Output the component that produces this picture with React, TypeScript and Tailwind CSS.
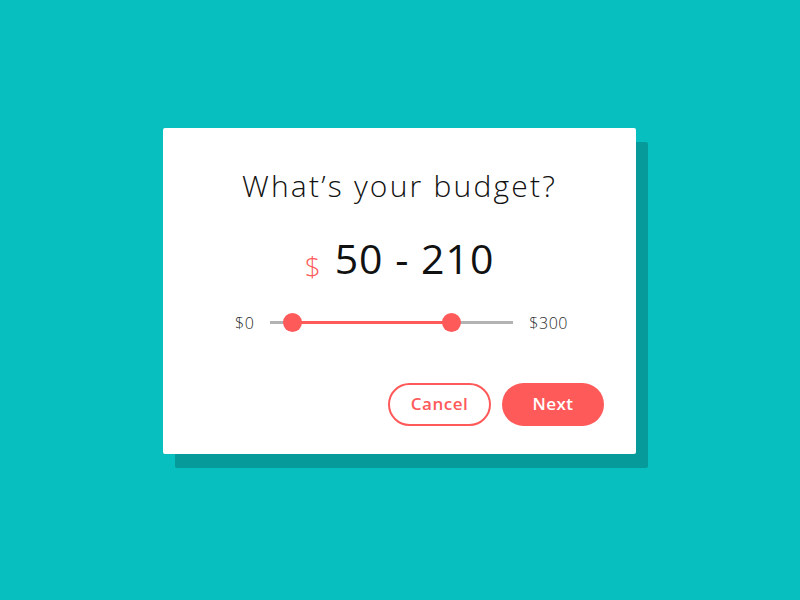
import { useState } from "react";

const MIN = 0;
const MAX = 300;
const TRACK_W = 243;

const thumbX = (v: number) => 22 + ((v - 50) / 160) * 159;

const BudgetSlider = ({ low, high }: { low: number; high: number }) => {
  const a = thumbX(low);
  const b = thumbX(high);

  return (
    <div className="flex items-center gap-4 text-[16px] font-light tracking-[0.5px] text-[#2a2a2a]">
      <span>${MIN}</span>
      <div className="relative w-[243px] h-[19px] flex items-center">
        <div className="h-[3px] w-full bg-[#b3b3b3]" />
        <div className="absolute h-[3px] bg-[#fe5a5a]" style={{ left: a, width: b - a }} />
        <div
          className="absolute w-[19px] h-[19px] -ml-[9.5px] rounded-full bg-[#fe5a5a]"
          style={{ left: a }}
        />
        <div
          className="absolute w-[19px] h-[19px] -ml-[9.5px] rounded-full bg-[#fe5a5a]"
          style={{ left: Math.min(b, TRACK_W) }}
        />
      </div>
      <span>${MAX}</span>
    </div>
  );
};

const App = () => {
  const [range] = useState({ low: 50, high: 210 });

  return (
    <div
      className="w-[800px] h-[600px] bg-[#08bfc0] flex items-center justify-center"
      style={{ fontFamily: '"Open Sans", "Liberation Sans", sans-serif' }}
    >
      <div className="relative w-[473px] h-[326px] mt-[-19px] ml-[-1px]">
        {/* flat offset shadow */}
        <div className="absolute left-[12px] top-[14px] w-full h-full rounded-[2px] bg-[#079a9a]" />
        <div className="relative w-full h-full rounded-[2px] bg-white flex flex-col items-center pt-[43px] px-8">
          <h1 className="text-[30px] font-light tracking-[2.2px] text-[#111] leading-none">
            What’s your budget?
          </h1>
          <div className="mt-[37px] flex items-baseline gap-[14px] leading-none">
            <span className="text-[28px] font-light text-[#fe5a5a] translate-y-[3px]">$</span>
            <span className="text-[41px] tracking-[1px] text-[#111]">
              {range.low} - {range.high}
            </span>
          </div>
          <div className="mt-[32px] ml-[4px]">
            <BudgetSlider low={range.low} high={range.high} />
          </div>
          <div className="mt-auto mb-[28px] self-end flex gap-[11px]">
            <button className="w-[103px] h-[43px] rounded-full border-2 border-[#fe5a5a] text-[#fe5a5a] text-[17px] font-semibold tracking-[0.5px]">
              Cancel
            </button>
            <button className="w-[102px] h-[43px] rounded-full bg-[#fe5a5a] text-white text-[17px] font-semibold tracking-[0.5px]">
              Next
            </button>
          </div>
        </div>
      </div>
    </div>
  );
};

export default App;
